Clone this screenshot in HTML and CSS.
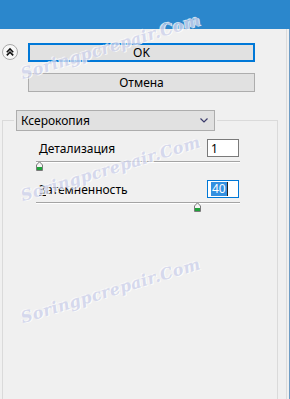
FILE: index.html
```html
<!DOCTYPE html>
<html lang="ru">
  <head>
    <meta charset="UTF-8" />
    <title>Ксерокопия</title>
    <link rel="stylesheet" href="styles.css">
  </head>
  <body>
    <div class="titlebar"></div>
    <div class="window">
      <main class="content">
        <div class="top-row">
          <span class="collapse">
            <svg width="16" height="16" viewBox="0 0 16 16">
              <circle cx="8" cy="8" r="7.5" fill="#f7f7f7" stroke="#a9a9a9" />
              <path d="M4.8 8.2 L8 5 L11.2 8.2 M4.8 11.4 L8 8.2 L11.2 11.4" fill="none" stroke="#111" stroke-width="1.6" />
            </svg>
          </span>
          <button class="btn btn-default">OK</button>
        </div>
        <button class="btn btn-cancel">Отмена</button>

        <fieldset class="group">
          <legend>
            <div class="dropdown">
              <span>Ксерокопия</span>
              <svg width="8" height="5" viewBox="0 0 8 5">
                <path d="M0.5 0.5 L4 4 L7.5 0.5" fill="none" stroke="#3b3b6b" stroke-width="1.2" />
              </svg>
            </div>
          </legend>

          <div class="row">
            <label><u>Д</u>етализация</label>
            <div class="field">1</div>
          </div>
          <div class="slider">
            <div class="track"></div>
            <svg class="thumb" style="left: 0px" width="7" height="10" viewBox="0 0 7 10">
              <path d="M0.5 9.5 V4 L3.5 0.8 L6.5 4 V9.5 Z" fill="#f4f4f4" stroke="#7a7a7a" />
              <rect x="1" y="6" width="5" height="3" fill="#1fa23a" />
            </svg>
          </div>

          <div class="row row-second">
            <label><u>З</u>атемненность</label>
            <div class="field field-active"><span class="selected">40</span><span class="caret"></span></div>
          </div>
          <div class="slider slider-second">
            <div class="track"></div>
            <svg class="thumb" style="left: 158px" width="7" height="10" viewBox="0 0 7 10">
              <path d="M0.5 9.5 V4 L3.5 0.8 L6.5 4 V9.5 Z" fill="#f4f4f4" stroke="#7a7a7a" />
              <rect x="1" y="6" width="5" height="3" fill="#1fa23a" />
            </svg>
          </div>
        </fieldset>

        <span class="watermark wm1">Soringpcrepair.Com</span>
        <span class="watermark wm2">Soringpcrepair.Com</span>
        <span class="watermark wm3">Soringpcrepair.Com</span>
      </main>
      <div class="edge"></div>
    </div>
  </body>
</html>
```

FILE: styles.css
```css
/* Base */
* {
  box-sizing: border-box;
}

body {
  margin: 0;
  width: 290px;
  height: 399px;
  overflow: hidden;
  background: #f0f0f0;
  font-family: "Noto Sans", "Open Sans", sans-serif;
  font-size: 12px;
  color: #000;
}

.titlebar {
  height: 29px;
  background: #2b87cc;
}

.window {
  display: flex;
  height: 370px;
}

.content {
  position: relative;
  flex: 1;
  padding-top: 14px;
}

.edge {
  width: 4px;
  border-left: 1px solid #dcdcdc;
  border-right: 1px solid #6f9cc4;
}

/* Buttons */
.top-row {
  display: flex;
  align-items: flex-start;
  padding-left: 2px;
  gap: 10px;
}

.collapse {
  display: block;
  width: 16px;
  height: 16px;
  margin-top: 1px;
}

.collapse svg {
  display: block;
}

.btn {
  display: block;
  width: 227px;
  height: 19px;
  padding: 0;
  font-family: inherit;
  font-size: 12px;
  line-height: 15px;
  color: #000;
  background: #e1e1e1;
  border: 1px solid #adadad;
}

.btn-default {
  border: 2px solid #0078d7;
}

.btn-cancel {
  margin: 11px 0 0 28px;
}

/* Group box */
.group {
  margin: 18px 0 0 2px;
  width: 276px;
  height: 300px;
  padding: 0 0 0 11px;
  border: 1px solid #dadada;
  border-bottom: none;
}

.group legend {
  padding: 0 2px;
  margin: 0;
}

.dropdown {
  display: flex;
  align-items: center;
  justify-content: space-between;
  width: 199px;
  height: 21px;
  padding: 0 6px 0 4px;
  background: #e1e1e1;
  border: 1px solid #adadad;
}

.row {
  display: flex;
  justify-content: space-between;
  align-items: flex-start;
  width: 200px;
  margin: 8px 0 0 25px;
}

.row label {
  padding-top: 1px;
}

.row-second {
  margin-top: 9px;
}

.field {
  display: flex;
  align-items: center;
  width: 32px;
  height: 18px;
  padding-left: 3px;
  color: #000;
  background: #fff;
  border: 1px solid #7a7a7a;
}

.field-active {
  border-color: #0078d7;
}

.selected {
  padding: 0 1px;
  background: #3390e0;
  color: #fff;
  line-height: 14px;
}

.caret {
  width: 1px;
  height: 14px;
  background: #222;
}

/* Sliders */
.slider {
  position: relative;
  width: 204px;
  height: 10px;
  margin: 4px 0 0 22px;
}

.slider-second {
  margin-top: 3px;
}

.track {
  margin-top: 4px;
  height: 2px;
  border-top: 1px solid #a4a4a4;
  background: #fff;
}

.thumb {
  position: absolute;
  top: 0;
}

/* Watermark */
.watermark {
  position: absolute;
  left: 24px;
  font-family: "DejaVu Serif", serif;
  font-style: italic;
  font-weight: bold;
  font-size: 16px;
  line-height: 18px;
  letter-spacing: 0.4px;
  color: #cfd3ec;
  text-shadow: 1px 1px 0 #fff, -1px -1px 0 #fafafa;
  transform: rotate(-17deg);
  transform-origin: left bottom;
  pointer-events: none;
  opacity: 0.8;
}

.wm1 {
  top: 36px;
}

.wm2 {
  top: 158px;
}

.wm3 {
  top: 280px;
}
```
